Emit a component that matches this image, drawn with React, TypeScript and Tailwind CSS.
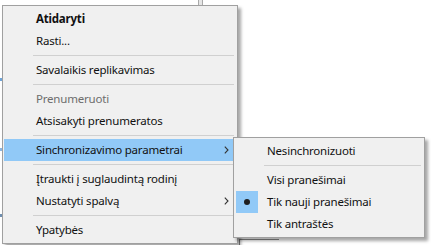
import React from 'react';

type Entry =
  | { kind: 'item'; label: string; bold?: boolean; disabled?: boolean; sub?: boolean; active?: boolean; checked?: boolean }
  | { kind: 'sep' };

const MAIN: Entry[] = [
  { kind: 'item', label: 'Atidaryti', bold: true },
  { kind: 'item', label: 'Rasti...' },
  { kind: 'sep' },
  { kind: 'item', label: 'Savalaikis replikavimas' },
  { kind: 'sep' },
  { kind: 'item', label: 'Prenumeruoti', disabled: true },
  { kind: 'item', label: 'Atsisakyti prenumeratos' },
  { kind: 'sep' },
  { kind: 'item', label: 'Sinchronizavimo parametrai', sub: true, active: true },
  { kind: 'sep' },
  { kind: 'item', label: 'Įtraukti į suglaudintą rodinį' },
  { kind: 'item', label: 'Nustatyti spalvą', sub: true },
  { kind: 'sep' },
  { kind: 'item', label: 'Ypatybės' },
];

const SUB: Entry[] = [
  { kind: 'item', label: 'Nesinchronizuoti' },
  { kind: 'sep' },
  { kind: 'item', label: 'Visi pranešimai' },
  { kind: 'item', label: 'Tik nauji pranešimai', checked: true },
  { kind: 'item', label: 'Tik antraštės' },
];

function Chevron() {
  return (
    <svg width="5" height="8" viewBox="0 0 5 8" className="shrink-0">
      <path d="M0.8 0.6 L4 4 L0.8 7.4" fill="none" stroke="#333" strokeWidth="1.1" />
    </svg>
  );
}

function Menu({ entries }: { entries: Entry[] }) {
  return (
    <div className="flex flex-col px-[1px] py-[2px]">
      {entries.map((e, i) =>
        e.kind === 'sep' ? (
          <div key={i} className="h-[7px] flex items-center pl-[29px] pr-[2px]">
            <div className="h-px w-full bg-[#d0d0d0]" />
          </div>
        ) : (
          <div
            key={i}
            className={`h-[22px] flex items-center ${e.active ? 'bg-[#91c9f7]' : ''} ${
              e.disabled ? 'text-[#6d6d6d]' : 'text-[#111]'
            } ${e.bold ? 'font-bold' : ''}`}
          >
            <div className={`w-[22px] h-[22px] ml-[1px] mr-[9px] flex items-center justify-center ${e.checked ? 'bg-[#91c9f7]' : ''}`}>
              {e.checked && <div className="w-[6px] h-[6px] rounded-full bg-[#1e1e1e]" />}
            </div>
            <span className="flex-1 whitespace-nowrap">{e.label}</span>
            {e.sub && (
              <div className="flex items-center pr-[7px]">
                <Chevron />
              </div>
            )}
          </div>
        )
      )}
    </div>
  );
}

export default function App() {
  return (
    <div
      className="relative w-[431px] h-[245px] overflow-hidden bg-white text-[11.5px] tracking-[-0.2px] leading-none"
      style={{ fontFamily: '"Noto Sans", "Open Sans", sans-serif' }}
    >
      {/* bits of the window behind */}
      <div className="absolute left-[198px] top-0 w-[5px] h-[6px] border-x border-[#a9a9a9] bg-[#e6e6e6]" />
      <div className="absolute left-[239px] top-[239px] w-[40px] h-[10px] border-l border-t border-[#8c8c8c] bg-white" />
      <div className="absolute left-0 top-[78px] w-[2px] h-[3px] bg-[#6fa4d8]" />
      <div className="absolute left-0 top-[148px] w-[2px] h-[3px] bg-[#8db6e0]" />
      <div className="absolute left-0 top-[214px] w-[2px] h-[3px] bg-[#6f8fb0]" />

      <div className="absolute left-[2px] top-[5px] w-[236px] bg-[#f0f0f0] border border-[#a0a0a0] shadow-[3px_3px_3px_rgba(0,0,0,0.35)]">
        <Menu entries={MAIN} />
      </div>

      <div className="absolute left-[233px] top-[137px] w-[192px] bg-[#f0f0f0] border border-[#a0a0a0] shadow-[3px_3px_3px_rgba(0,0,0,0.35)]">
        <Menu entries={SUB} />
      </div>
    </div>
  );
}
